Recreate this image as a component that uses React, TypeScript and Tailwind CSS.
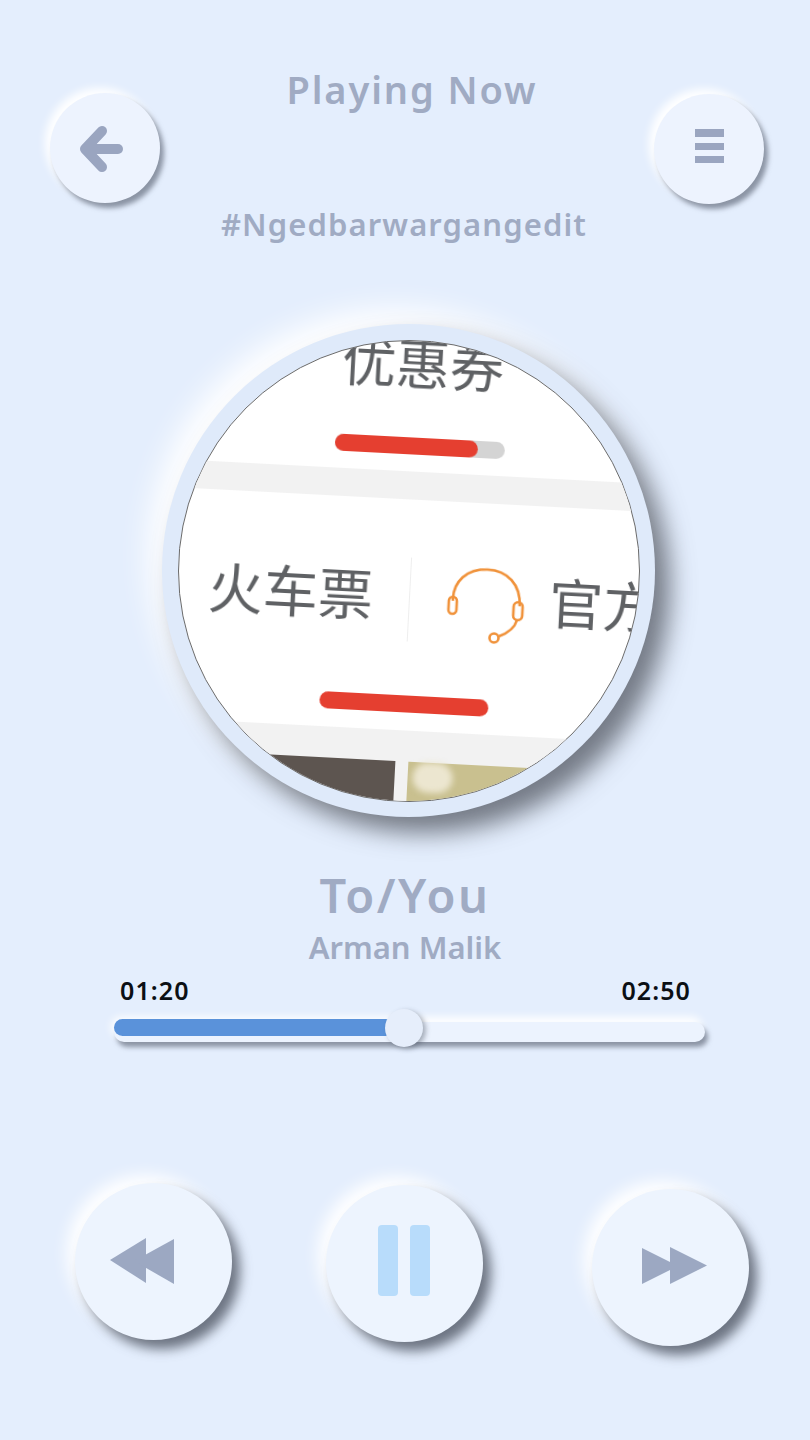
import React from 'react'

const heading = 'font-["Noto_Sans","Open_Sans",sans-serif] font-semibold text-[#a0abc3]'

function SmallButton({ children, className }: { children: React.ReactNode; className: string }) {
  return (
    <button
      className={`flex h-[110px] w-[110px] shrink-0 items-center justify-center rounded-full bg-[#edf3fe] shadow-[4px_5px_5px_rgba(80,88,105,0.6),-5px_-5px_9px_#ffffff] ${className}`}
    >
      {children}
    </button>
  )
}

function BigButton({ children, className }: { children: React.ReactNode; className: string }) {
  return (
    <button
      className={`flex h-[157px] w-[157px] items-center justify-center rounded-full bg-[#edf4fe] shadow-[8px_9px_12px_rgba(70,76,90,0.75),-8px_-8px_16px_#ffffff] ${className}`}
    >
      {children}
    </button>
  )
}

function Headset() {
  return (
    <svg width="80" height="80" viewBox="0 0 80 80" fill="none" stroke="#f0923a" strokeWidth="2.6" className="mt-[2px] shrink-0">
      <path d="M7 38 C6 18 20 5 40 5 C60 5 74 18 74 40" />
      <rect x="3" y="34" width="8" height="17" rx="4" />
      <rect x="68" y="36" width="9" height="18" rx="4.5" />
      <path d="M72 54 C70 62 62 68 55 71" />
      <circle cx="50" cy="73" r="4.5" />
    </svg>
  )
}

function Disc() {
  return (
    <div className="mt-[80px] ml-[162px] flex h-[493px] w-[493px] items-center justify-center rounded-full bg-[#dfeafa] shadow-[15px_16px_24px_rgba(85,90,100,0.78),-14px_-15px_30px_#ffffff]">
      <div className="h-[462px] w-[462px] overflow-hidden rounded-full border border-[#6b6b6b] bg-white">
        <div className='-ml-[40px] w-[560px] rotate-[3deg] font-["Noto_Sans_CJK_SC",sans-serif] text-[#5f6164] blur-[0.5px]'>
          <div className="-mt-[6px] ml-[192px] h-[54px] text-[54px] leading-[54px]">优惠券</div>
          <div className="mt-[49px] ml-[189px] h-[17px] w-[170px] rounded-full bg-[#d4d4d4]">
            <div className="h-full w-[143px] rounded-full bg-[#e53f30]" />
          </div>
          <div className="mt-[17px] h-[28px] bg-[#f2f2f2]" />
          <div className="mt-[58px] flex h-[84px] items-center">
            <span className="ml-[70px] w-[201px] -translate-y-[6px] text-[55px] leading-none">火车票</span>
            <div className="h-[84px] w-px bg-[#eeeeee]" />
            <div className="ml-[36px]">
              <Headset />
            </div>
            <span className="ml-[23px] -translate-y-[6px] text-[54px] leading-none whitespace-nowrap">官方</span>
          </div>
          <div className="mt-[54px] ml-[187px] h-[17px] w-[169px] rounded-full bg-[#e53f30]" />
          <div className="mt-[18px] h-[31px] bg-[#f2f2f2]" />
          <div className="flex gap-[13px] bg-[#f2f2f2]">
            <div className="h-[60px] w-[266px] bg-[#5d5550]" />
            <div className="relative h-[60px] flex-1 bg-[#c9c08f]">
              <div className="absolute top-0 left-[5px] h-[30px] w-[40px] rounded-full bg-[#ece6d0] blur-[3px]" />
            </div>
          </div>
        </div>
      </div>
    </div>
  )
}

export default function App() {
  return (
    <div className="h-[1440px] w-[810px] overflow-hidden bg-[#e4eefd]">
      {/* Header */}
      <header className="flex items-start pt-[65px] pr-[46px] pl-[50px]">
        <SmallButton className="mt-[28px]">
          <svg width="48" height="48" viewBox="0 0 48 48" fill="none" stroke="#9aa5c0" strokeWidth="10" strokeLinecap="round" strokeLinejoin="round" className="-translate-x-[3px]">
            <path d="M24 7 L7 25 L24 43" />
            <path d="M9 25 H40" />
          </svg>
        </SmallButton>
        <div className="flex flex-1 flex-col items-center">
          <h1 className={`ml-[10px] text-[38px] leading-[48px] tracking-[1.9px] ${heading}`}>Playing Now</h1>
          <p className={`mt-[91px] mr-[6px] text-[31px] leading-[40px] tracking-[1.1px] ${heading}`}>#Ngedbarwargangedit</p>
        </div>
        <SmallButton className="mt-[29px]">
          <div className="flex w-[29px] -translate-y-[3px] flex-col gap-[6px]">
            <div className="h-[8px] bg-[#9aa5c0]" />
            <div className="h-[7px] bg-[#9aa5c0]" />
            <div className="h-[7px] bg-[#9aa5c0]" />
          </div>
        </SmallButton>
      </header>

      <Disc />

      {/* Track info */}
      <div className="mt-[48px] flex flex-col items-center">
        <h2 className={`text-[47px] leading-[60px] tracking-[2.5px] ${heading}`}>To/You</h2>
        <p className={`mt-[3px] text-[31px] leading-[38px] ${heading}`}>Arman Malik</p>
      </div>

      {/* Progress */}
      <div className='mt-[7px] flex justify-between pr-[119px] pl-[120px] font-["Noto_Sans",sans-serif] text-[25px] leading-[34px] font-semibold tracking-[1.1px] text-[#0b0f14]'>
        <span>01:20</span>
        <span>02:50</span>
      </div>
      <div className="mt-[1px] ml-[114px] flex h-[38px] w-[591px] items-center">
        <div className="relative h-[20px] w-full translate-y-[5px] rounded-full bg-[#ecf3fe] shadow-[3px_5px_5px_rgba(80,88,105,0.6),-3px_-5px_8px_#ffffff]">
          <div className="absolute top-[-3px] left-0 h-[17px] w-[280px] rounded-full bg-[#5a92da]" />
          <div className="absolute top-[-13px] left-[271px] h-[38px] w-[38px] rounded-full bg-[#e6eefb] shadow-[3px_2px_5px_rgba(80,88,105,0.45)]" />
        </div>
      </div>

      {/* Controls */}
      <div className="mt-[137px] flex items-start pl-[75px]">
        <BigButton className="">
          <svg width="65" height="47" viewBox="0 0 65 47" fill="#9ca8c2" className="-translate-x-[11px]">
            <polygon points="0,22 36,0 36,45" />
            <polygon points="24,23 64,1 64,46" />
          </svg>
        </BigButton>
        <BigButton className="mt-[2px] ml-[94px]">
          <div className="flex -translate-x-[1px] -translate-y-[3px] gap-[12px]">
            <div className="h-[71px] w-[20px] rounded-[4px] bg-[#b8dcfb]" />
            <div className="h-[71px] w-[20px] rounded-[4px] bg-[#b8dcfb]" />
          </div>
        </BigButton>
        <BigButton className="mt-[6px] ml-[109px]">
          <svg width="65" height="38" viewBox="0 0 65 38" fill="#9ca8c2" className="translate-x-[4px] -translate-y-[2px]">
            <polygon points="0,1 36,19 0,37" />
            <polygon points="28,0 65,18.5 28,37" />
          </svg>
        </BigButton>
      </div>
    </div>
  )
}
